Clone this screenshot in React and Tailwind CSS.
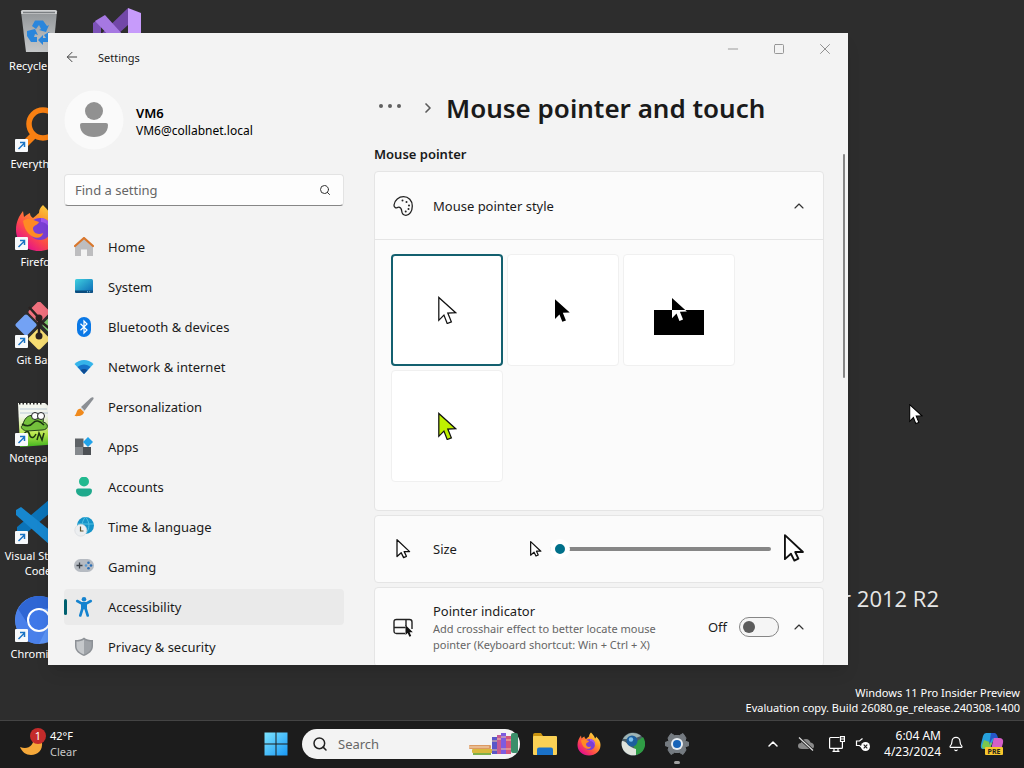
import React, { useState } from 'react'
import { ArrowLeft, Bell, ChevronRight, ChevronUp, Minus, Search, Square, X } from 'lucide-react'

const ARROW = 'M0 0V23.7L5.3 18.3L8.7 27L13 25.3L9.3 16.2L17.5 15.8Z'
const SOFT_ARROW = 'M2 1.6V18.4L6.2 14.6L8.6 19.4L11.4 18.1L9.2 13.4H14.6Z'

/* ---------- desktop icons ---------- */

function RecycleBinIcon() {
  return (
    <svg className="size-12" viewBox="0 0 48 48">
      <defs>
        <linearGradient id="bin" x1="0" y1="0" x2="0" y2="1">
          <stop offset="0" stopColor="#8f9396" />
          <stop offset="0.6" stopColor="#b2b5b7" />
          <stop offset="1" stopColor="#c6c8c9" />
        </linearGradient>
      </defs>
      <path d="M6 3.500Q6 2 8 2H40Q42 2 42 3.500L38 44H11Z" fill="url(#bin)" />
      <path d="M6 3.500Q6 2 8 2H40Q42 2 42 3.500L41.700 6H6.300Z" fill="#cfd1d2" />
      <path d="M8 4.500H40" stroke="#7b7f82" strokeWidth="1.500" />
      <g fill="#2a86dc">
        <path d="M17 18L20 12.500H28L32 18L34 17L31 24L24 22L26 21L24 17L21 21Z" />
        <path d="M12 23L20 21L23 27L20 26L19 29H22V34H16L12 28Z" />
        <path d="M34 24L37 30L33 34H28V37L23 32L28 27V30H31L29 27Z" />
      </g>
    </svg>
  )
}

function VisualStudioIcon() {
  return (
    <svg className="size-12" viewBox="0 0 48 48">
      <path d="M35 0L48 5V43L35 48Z" fill="#c79bfb" />
      <path d="M35 0V17L14 36L4 30Z" fill="#7247a8" />
      <path d="M0 15L3 13L8 18V30L0 35Z" fill="#7c52b8" />
      <path d="M2 13L12 7L40 38L35 48Z" fill="#a678e2" />
    </svg>
  )
}

function EverythingIcon() {
  return (
    <svg className="size-12" viewBox="0 0 48 48" fill="none" stroke="#f98012">
      <circle cx="28" cy="18" r="14" strokeWidth="5.500" />
      <path d="M18 30L9 39" strokeWidth="7" />
    </svg>
  )
}

function FirefoxIcon({ className, id }) {
  return (
    <svg className={className} viewBox="0 0 48 48">
      <defs>
        <linearGradient id={id} x1="0.9" y1="0.1" x2="0.2" y2="0.9">
          <stop offset="0" stopColor="#ffe34a" />
          <stop offset="0.35" stopColor="#ff9a2b" />
          <stop offset="0.7" stopColor="#ff4a4a" />
          <stop offset="1" stopColor="#e3128a" />
        </linearGradient>
      </defs>
      <path
        d="M28 1C31 4 35 8 36 13C38 12 38 10 38 9C44 14 47 20 47 26C47 38 37 47 24 47S1 38 1 26C1 18 4 12 8 7L9 13C11 11 13 10 15 9C15 11 16 13 18 14C21 12 22 10 24 9C24 5 26 3 28 1Z"
        fill={'url(#' + id + ')'}
      />
      <circle cx="25" cy="25" r="11" fill="#7b3fd6" />
      <path d="M8 17C13 13 18 16 24 18C23 21 19 21 18 24C18 30 24 31 28 29C27 37 11 36 8 17Z" fill="#ff8a24" />
      <path d="M26 14C32 14 37 19 36 27C34 22 31 18 26 18Z" fill="#a157f0" />
    </svg>
  )
}

function GitIcon() {
  return (
    <svg className="size-12" viewBox="0 0 48 48">
      <rect x="3" y="15" width="16" height="16" rx="2" transform="rotate(45 11 23)" fill="#73a2f4" />
      <rect x="16" y="2" width="16" height="16" rx="2" transform="rotate(45 24 10)" fill="#f0707d" />
      <rect x="30" y="15" width="16" height="16" rx="2" transform="rotate(45 38 23)" fill="#7fc970" />
      <rect x="16" y="29" width="16" height="16" rx="2" transform="rotate(45 24 37)" fill="#f7dd72" />
      <path d="M14 5L24 16V34M24 18L35 27" stroke="#2b2220" strokeWidth="2.500" fill="none" />
      <circle cx="24" cy="16" r="3.500" fill="#2b2220" />
      <circle cx="24" cy="34" r="3.500" fill="#2b2220" />
    </svg>
  )
}

function NotepadIcon() {
  return (
    <svg className="size-12" viewBox="0 0 48 48">
      <defs>
        <linearGradient id="npp" x1="0" y1="0" x2="0" y2="1">
          <stop offset="0.3" stopColor="#f4f7ef" />
          <stop offset="0.7" stopColor="#b9e84b" />
          <stop offset="1" stopColor="#3fb51f" />
        </linearGradient>
      </defs>
      <path d="M3 3H30L38 10L44 44L5 47Z" fill="url(#npp)" />
      <path d="M4 3H28" stroke="#222" strokeWidth="3" strokeDasharray="1.500 2" />
      <path d="M5 9H32M5 13H34" stroke="#bccbd6" strokeWidth="1" />
      <path d="M8 25C9 17 16 13 20 17C24 12 30 16 28 22C34 23 34 30 27 30L12 31C6 30 5 26 8 25Z" fill="#74c13c" stroke="#24421a" />
      <circle cx="20" cy="16" r="3.500" fill="#fff" stroke="#222" />
      <circle cx="26" cy="16" r="3.500" fill="#fff" stroke="#222" />
      <path d="M7 24Q14 28 18 23T29 25M9 34Q13 28 15 36Q18 40 21 34M22 40L24 33L27 40L29 33" stroke="#1c3312" strokeWidth="1.500" fill="none" />
    </svg>
  )
}

function VsCodeIcon() {
  return (
    <svg className="size-12" viewBox="0 0 48 48">
      <path d="M35 1L47 6V42L35 47L30 40L36 34V14L8 38L2 33V29Z" fill="#0b73b8" />
      <path d="M1 12L6 9L42 38L35 47L1 17Z" fill="#1787cf" />
    </svg>
  )
}

function ChromiumIcon() {
  return (
    <svg className="size-12" viewBox="0 0 48 48">
      <circle cx="24" cy="24" r="24" fill="#5c94f5" />
      <path d="M3 13A24 24 0 0 0 24 48L33 30L14 30Z" fill="#4a80ea" />
      <path d="M3 13A24 24 0 0 1 45 12L24 13Z" fill="#2f66d4" />
      <path d="M3 13L14 30L12 22L24 13Z" fill="#2f66d4" />
      <circle cx="24" cy="24" r="11" fill="#3f78e8" stroke="#fff" strokeWidth="2" />
    </svg>
  )
}

const DESKTOP_ICONS = [
  { label: 'Recycle Bin', icon: <RecycleBinIcon /> },
  { label: 'Everything', icon: <EverythingIcon />, shortcut: true },
  { label: 'Firefox', icon: <FirefoxIcon className="size-12" id="ff-desktop" />, shortcut: true },
  { label: 'Git Bash', icon: <GitIcon />, shortcut: true },
  { label: 'Notepad++', icon: <NotepadIcon />, shortcut: true },
  { label: 'Visual Studio Code', icon: <VsCodeIcon />, shortcut: true },
  { label: 'Chromium', icon: <ChromiumIcon />, shortcut: true },
]

function DesktopIcon({ label, icon, shortcut }) {
  return (
    <button className="flex h-[98px] w-[78px] flex-col items-center pt-2 text-[11px] leading-[15px] text-white">
      <span className="relative mb-0.5">
        {icon}
        {shortcut ? (
          <svg className="absolute bottom-0.5 left-0 size-[13px]" viewBox="0 0 13 13">
            <rect width="13" height="13" rx="1" fill="#f7f9fb" />
            <path d="M3.500 10L9 4.500M5 3.500H9.500V8" stroke="#1b74c4" strokeWidth="1.500" fill="none" />
          </svg>
        ) : null}
      </span>
      <span className="pr-1.5 pl-1 text-center">{label}</span>
    </button>
  )
}

/* ---------- navigation icons, all on a 20px grid ---------- */

function NavIcon({ name }) {
  return (
    <svg className="size-5 shrink-0" viewBox="0 0 20 20">
      {name === 'home' && (
        <>
          <path d="M1 9L10 1.500L19 9V19H13V12.500H7V19H1Z" fill="#bdbdbf" />
          <path d="M1 9L10 1L19 9" stroke="#d9762b" strokeWidth="2.200" fill="none" strokeLinecap="round" strokeLinejoin="round" />
        </>
      )}
      {name === 'system' && (
        <>
          <defs>
            <linearGradient id="sys" x1="0" y1="0" x2="1" y2="1">
              <stop offset="0" stopColor="#3fd0e0" />
              <stop offset="1" stopColor="#0b67b5" />
            </linearGradient>
          </defs>
          <rect x="1" y="2" width="18" height="14" rx="1.500" fill="url(#sys)" />
          <path d="M1 13.500H19V14.500Q19 16 17.500 16H2.500Q1 16 1 14.500Z" fill="#0b4c7e" />
          <path d="M13 14.800H17.500" stroke="#8fd0ee" strokeDasharray="1 1.200" />
        </>
      )}
      {name === 'bluetooth' && (
        <>
          <rect x="3" y="0" width="14" height="20" rx="7" fill="#0a78e6" />
          <path d="M6.500 6.700L13 13L10 16V4L13 7L6.500 13.300" stroke="#fff" strokeWidth="1.200" fill="none" />
        </>
      )}
      {name === 'network' && (
        <>
          <path d="M0.500 7C6 1.500 14 1.500 19.500 7L10 17Z" fill="#35b4ea" />
          <path d="M3.500 10C7 6.500 13 6.500 16.500 10L10 17Z" fill="#1673c9" />
          <path d="M6.500 13.300C8.500 11.500 11.500 11.500 13.500 13.300L10 17Z" fill="#0f4b92" />
        </>
      )}
      {name === 'brush' && (
        <>
          <path d="M19.500 2C20 0 18.500 0 17 0.800L7 10L10.500 13.800Z" fill="#8b8f94" />
          <path d="M6.500 11.500L10 15C9.500 19 4 19.500 0.500 19C3 17 2 12 6.500 11.500Z" fill="#f08a1c" />
          <path d="M6.700 10.800L10.300 14.400" stroke="#d9dadb" strokeWidth="1.200" />
        </>
      )}
      {name === 'apps' && (
        <>
          <path d="M1 1.500H9.500V10H1Z" fill="#5e6266" />
          <path d="M1 10H9.500V18H1Z" fill="#85898d" />
          <path d="M9 10H17V18H9Z" fill="#4c5054" />
          <path d="M14 0L19 5L14 10L9 5Z" fill="#22a3ea" />
        </>
      )}
      {name === 'accounts' && (
        <>
          <circle cx="10" cy="4.500" r="5" fill="#22b98f" />
          <path d="M2 13.500Q2 11.500 4 11.500H16Q18 11.500 18 13.500C18 17.500 14.500 19.500 10 19.500S2 17.500 2 13.500Z" fill="#1fa98c" />
        </>
      )}
      {name === 'time' && (
        <>
          <circle cx="11.500" cy="8.500" r="8.500" fill="#1593c8" />
          <path d="M3.500 7H19.500M11.500 0C7 5 7 12 11.500 17M11.500 0C16 5 16 12 11.500 17" stroke="#4fbfe2" fill="none" />
          <circle cx="6.800" cy="13.200" r="6" fill="#eceef0" stroke="#cfd3d6" strokeWidth="0.500" />
          <path d="M6.500 9.500V14H9.500" stroke="#5a5230" strokeWidth="1.200" fill="none" />
        </>
      )}
      {name === 'gaming' && (
        <>
          <rect x="0" y="2" width="20" height="13" rx="6.500" fill="#b6bbc2" />
          <path d="M5.500 5.500V11.500M2.500 8.500H8.500" stroke="#3b4148" strokeWidth="1.300" />
          <circle cx="14.500" cy="5.800" r="1.300" fill="#2d6fb5" />
          <circle cx="12" cy="8.500" r="1.300" fill="#5a9bd5" />
          <circle cx="17" cy="8.500" r="1.300" fill="#2d6fb5" />
          <circle cx="14.500" cy="11.200" r="1.300" fill="#2d6fb5" />
        </>
      )}
      {name === 'accessibility' && (
        <>
          <circle cx="10" cy="2.300" r="2.300" fill="#1583cf" />
          <path d="M3.200 4L7.500 6.300H12.500L16.800 4M10 6.500V11M8.300 6.500V12L6.300 18.500M11.700 6.500V12L13.700 18.500" stroke="#1583cf" strokeWidth="2.600" strokeLinecap="round" strokeLinejoin="round" fill="none" />
        </>
      )}
      {name === 'shield' && (
        <>
          <path d="M10 0.500C12 2.500 15.500 3 19 3V9C19 14 15 17 10 19C5 17 1 14 1 9V3C4.500 3 8 2.500 10 0.500Z" fill="#8d9196" />
          <path d="M10 2.500C12 4 14.500 4.500 17.500 4.500V9C17.500 13 14.500 15.500 10 17.500Z" fill="#9fa3a8" />
          <path d="M10 2.500C8 4 5.500 4.500 2.500 4.500V9C2.500 13 5.500 15.500 10 17.500Z" fill="#c5c8cb" />
        </>
      )}
    </svg>
  )
}

const NAV = [
  { icon: 'home', label: 'Home' },
  { icon: 'system', label: 'System' },
  { icon: 'bluetooth', label: 'Bluetooth & devices' },
  { icon: 'network', label: 'Network & internet' },
  { icon: 'brush', label: 'Personalization' },
  { icon: 'apps', label: 'Apps' },
  { icon: 'accounts', label: 'Accounts' },
  { icon: 'time', label: 'Time & language' },
  { icon: 'gaming', label: 'Gaming' },
  { icon: 'accessibility', label: 'Accessibility' },
  { icon: 'shield', label: 'Privacy & security' },
]

/* ---------- pointer previews ---------- */

function WhitePointer() {
  return (
    <svg className="h-7 w-[19px]" viewBox="-0.500 -1.500 19 29">
      <path d={ARROW} fill="#fff" stroke="#111" strokeWidth="1.300" />
    </svg>
  )
}

function BlackPointer() {
  return (
    <svg className="h-[23px] w-4" viewBox="0 0 19 27">
      <path d={ARROW} fill="#000" />
    </svg>
  )
}

function InvertedPointer() {
  return (
    <svg className="size-[50px]" viewBox="0 0 50 50">
      <defs>
        <clipPath id="lower-half">
          <rect x="0" y="25" width="50" height="25" />
        </clipPath>
      </defs>
      <path d={ARROW} transform="translate(18 13) scale(0.85)" fill="#000" />
      <rect x="0" y="25" width="50" height="25" fill="#000" />
      <g clipPath="url(#lower-half)">
        <path d={ARROW} transform="translate(18 13) scale(0.85)" fill="#fff" />
      </g>
    </svg>
  )
}

function CustomPointer() {
  return (
    <svg className="h-7 w-[19px]" viewBox="-0.500 -1.500 19 29">
      <path d={ARROW} fill="#bff000" stroke="#111" strokeWidth="1.300" />
    </svg>
  )
}

const STYLES = [
  { id: 'white', label: 'White', preview: <WhitePointer /> },
  { id: 'black', label: 'Black', preview: <BlackPointer /> },
  { id: 'inverted', label: 'Inverted', preview: <InvertedPointer /> },
  { id: 'custom', label: 'Custom', preview: <CustomPointer /> },
]

function SoftArrow({ className, strokeWidth }) {
  return (
    <svg className={className} viewBox="0 0.800 16 21">
      <path d={SOFT_ARROW} fill="#fff" stroke="#111" strokeWidth={strokeWidth} strokeLinejoin="round" />
    </svg>
  )
}

function PaletteIcon() {
  return (
    <svg className="size-5" viewBox="0 0 20 20" fill="none" stroke="#222" strokeWidth="1.300">
      <path d="M1 9C1.500 4 6 0.700 10.500 0.700C15.500 0.700 19.300 4.500 19.300 10C19.300 15.500 16.500 19.300 13 19.300C10 19.300 9 17.500 8.700 15C8.500 12.500 7.500 11.500 6 11.200C4.500 11 3.500 12.300 2.300 11.600C1.300 11 0.900 10 1 9Z" />
      <g fill="#222" stroke="none">
        <circle cx="9.500" cy="4.500" r="1" />
        <circle cx="13.500" cy="6" r="1" />
        <circle cx="16" cy="9.500" r="1" />
        <circle cx="15.500" cy="13" r="1" />
        <circle cx="12.700" cy="15.500" r="1" />
      </g>
    </svg>
  )
}

function IndicatorIcon() {
  return (
    <svg className="size-5" viewBox="0 0 20 20">
      <path d="M12 16.500H3.500Q1 16.500 1 14V5Q1 2.500 3.500 2.500H16.500Q19 2.500 19 5V12M1 10.500H12.500M13 2.500V9" fill="none" stroke="#222" strokeWidth="1.400" />
      <path d="M12.500 8V18L14.700 16L16.400 19.800L18.200 19L16.600 15.300H19.800Z" fill="#111" />
    </svg>
  )
}

/* ---------- settings window ---------- */

function Sidebar() {
  const [query, setQuery] = useState('')
  return (
    <aside className="w-[280px] shrink-0 pt-[9px]">
      <div className="flex items-center gap-3">
        <svg className="size-[60px]" viewBox="0 0 60 60">
          <circle cx="30" cy="30" r="29.500" fill="#fafafa" />
          <circle cx="30" cy="21" r="9" fill="#919191" />
          <path d="M16 35Q16 33 18 33H42Q44 33 44 35C44 43 38 47 30 47S16 43 16 35Z" fill="#919191" />
        </svg>
        <div className="pt-0.5">
          <div className="text-[13px] leading-5 font-semibold text-black">VM6</div>
          <div className="text-xs leading-4 text-black">VM6@collabnet.local</div>
        </div>
      </div>

      <label className="mt-6 flex h-8 items-center rounded-sm border border-[#e3e3e3] border-b-[#868686] bg-[#fdfdfd] pr-3 pl-2.5">
        <input
          className="min-w-0 flex-1 bg-transparent text-[13px] leading-5 outline-none placeholder:text-[#666]"
          placeholder="Find a setting"
          aria-label="Find a setting"
          value={query}
          onChange={(e) => setQuery(e.target.value)}
        />
        <Search className="size-3 text-[#333]" strokeWidth={2} />
      </label>

      <nav className="mt-[23px] flex flex-col gap-1">
        {NAV.map((item) => {
          const active = item.label === 'Accessibility'
          return (
            <a
              key={item.label}
              href="#"
              aria-current={active ? 'page' : undefined}
              className={'flex h-9 items-center rounded text-[13px] leading-5 text-[#1b1b1b] ' + (active ? 'bg-[#eaeaea]' : '')}
            >
              <span className={'mr-[7px] h-4 w-[3px] rounded-full ' + (active ? 'bg-[#00606f]' : '')} />
              <NavIcon name={item.icon} />
              <span className="ml-3.5">{item.label}</span>
            </a>
          )
        })}
      </nav>
    </aside>
  )
}

function PointerPage() {
  const [style, setStyle] = useState('white')
  const [size, setSize] = useState(1)
  const [indicator, setIndicator] = useState(false)

  return (
    <main className="min-w-0 flex-1 overflow-hidden pt-[9px] pr-6 pl-[30px]">
      <div className="flex h-9 items-center">
        <button aria-label="More" className="flex w-8 justify-center gap-[5px] pb-1">
          <span className="size-1 rounded-full bg-[#606060]" />
          <span className="size-1 rounded-full bg-[#606060]" />
          <span className="size-1 rounded-full bg-[#606060]" />
        </button>
        <ChevronRight className="ml-3.5 size-4 text-[#5a5a5a]" strokeWidth={2.5} />
        <h1 className="ml-2.5 text-[26px] leading-9 font-semibold whitespace-nowrap text-[#1a1a1a]">Mouse pointer and touch</h1>
      </div>

      <h2 className="mt-[18px] text-[13px] leading-5 font-semibold text-[#1a1a1a]">Mouse pointer</h2>

      <div className="mt-[7px] flex flex-col gap-1">
        <section className="rounded border border-[#e5e5e5] bg-[#fbfbfb]">
          <button className="flex h-[67px] w-full items-center pr-4 pl-[18px] text-left">
            <PaletteIcon />
            <span className="ml-5 flex-1 text-[13px] leading-5 text-[#1b1b1b]">Mouse pointer style</span>
            <ChevronUp className="size-4 text-[#333]" strokeWidth={1.75} />
          </button>
          <div className="flex flex-wrap gap-1 border-t border-[#e5e5e5] px-4 pt-3.5 pb-7">
            {STYLES.map((s) => (
              <button
                key={s.id}
                aria-label={s.label}
                aria-pressed={style === s.id}
                onClick={() => setStyle(s.id)}
                className={
                  'flex size-28 items-center justify-center rounded bg-white ' +
                  (style === s.id ? 'border-2 border-[#13606f]' : 'border border-[#f0f0f0]')
                }
              >
                {s.preview}
              </button>
            ))}
          </div>
        </section>

        <section className="flex h-[68px] items-center rounded border border-[#e5e5e5] bg-[#fbfbfb] px-[18px]">
          <span className="flex w-5 justify-center">
            <SoftArrow className="h-[21px] w-4" strokeWidth={1.3} />
          </span>
          <label htmlFor="pointer-size" className="ml-5 flex-1 text-[13px] leading-5 text-[#1b1b1b]">Size</label>
          <SoftArrow className="mr-2 h-[17px] w-[13px]" strokeWidth={1.5} />
          <input
            id="pointer-size"
            type="range"
            min="1"
            max="15"
            value={size}
            onChange={(e) => setSize(Number(e.target.value))}
            className="mr-[11px] h-5 w-[221px] appearance-none bg-transparent [&::-webkit-slider-runnable-track]:h-1 [&::-webkit-slider-runnable-track]:rounded-full [&::-webkit-slider-runnable-track]:bg-[#868686] [&::-webkit-slider-thumb]:-mt-2 [&::-webkit-slider-thumb]:size-5 [&::-webkit-slider-thumb]:appearance-none [&::-webkit-slider-thumb]:rounded-full [&::-webkit-slider-thumb]:border-[5px] [&::-webkit-slider-thumb]:border-solid [&::-webkit-slider-thumb]:border-white [&::-webkit-slider-thumb]:bg-[#00708a]"
          />
          <SoftArrow className="h-[30px] w-[23px]" strokeWidth={1.3} />
        </section>

        <section className="flex items-center rounded border border-[#e5e5e5] bg-[#fbfbfb] py-[13px] pr-4 pl-[18px]">
          <IndicatorIcon />
          <label htmlFor="pointer-indicator" className="ml-5 flex-1">
            <span className="block text-[13px] leading-5 text-[#1b1b1b]">Pointer indicator</span>
            <span className="block w-[250px] text-[11px] leading-4 text-[#666]">
              Add crosshair effect to better locate mouse pointer (Keyboard shortcut: Win + Ctrl + X)
            </span>
          </label>
          <span className="mr-3 text-[13px] leading-5 text-[#1b1b1b]">{indicator ? 'On' : 'Off'}</span>
          <input
            id="pointer-indicator"
            type="checkbox"
            role="switch"
            checked={indicator}
            onChange={(e) => setIndicator(e.target.checked)}
            className="mr-3 flex h-5 w-10 appearance-none items-center rounded-full border border-[#868686] bg-[#f5f5f5] px-[3px] before:size-3 before:rounded-full before:bg-[#5c5c5c] before:content-[''] checked:justify-end checked:bg-[#00708a] checked:before:bg-white"
          />
          <ChevronUp className="size-4 text-[#333]" strokeWidth={1.75} />
        </section>
      </div>
    </main>
  )
}

function SettingsWindow() {
  return (
    <div className="absolute top-[33px] left-12 flex h-[632px] w-[800px] flex-col overflow-hidden bg-[#f3f3f3] shadow-lg">
      <header className="flex h-12 shrink-0 items-center">
        <button aria-label="Back" className="ml-4 flex size-4">
          <ArrowLeft className="size-4 text-[#444]" strokeWidth={1.5} />
        </button>
        <span className="ml-[18px] flex-1 pt-0.5 text-[11px] leading-4 text-[#1b1b1b]">Settings</span>
        <div className="flex self-start text-[#8a8a8a]">
          <button aria-label="Minimize" className="flex h-8 w-[46px] items-center justify-center">
            <Minus className="size-4" strokeWidth={1.25} />
          </button>
          <button aria-label="Maximize" className="flex h-8 w-[46px] items-center justify-center">
            <Square className="size-3" strokeWidth={1.75} />
          </button>
          <button aria-label="Close" className="flex h-8 w-[46px] items-center justify-center">
            <X className="size-[18px]" strokeWidth={1.25} />
          </button>
        </div>
      </header>
      <div className="flex min-h-0 flex-1 pl-4">
        <Sidebar />
        <PointerPage />
      </div>
      <span className="absolute top-[121px] right-[3px] h-56 w-0.5 rounded-full bg-[#868686]" />
    </div>
  )
}

/* ---------- taskbar ---------- */

function StartIcon() {
  return (
    <svg className="size-6" viewBox="0 0 24 24">
      <defs>
        <linearGradient id="start" gradientUnits="userSpaceOnUse" x1="0" y1="0" x2="24" y2="24">
          <stop offset="0" stopColor="#7fe6ff" />
          <stop offset="1" stopColor="#1696f5" />
        </linearGradient>
      </defs>
      <path d="M0.500 0.500H11.500V11.500H0.500ZM12.500 0.500H23.500V11.500H12.500ZM0.500 12.500H11.500V23.500H0.500ZM12.500 12.500H23.500V23.500H12.500Z" fill="url(#start)" />
    </svg>
  )
}

function BooksIcon() {
  return (
    <svg className="h-6 w-[52px]" viewBox="0 0 52 24">
      <rect x="1" y="13" width="22" height="4" rx="1" fill="#dc9a62" />
      <rect x="4" y="17" width="22" height="4" rx="1" fill="#d9b93c" />
      <rect x="1" y="14.500" width="20" height="1" fill="#f3dcc0" />
      <rect x="5" y="21" width="18" height="2" fill="#7fb04a" />
      <rect x="24" y="5" width="5" height="17" fill="#5a56c8" />
      <rect x="29" y="3" width="4" height="19" fill="#c55a94" />
      <rect x="33" y="1" width="5" height="21" fill="#7d5be0" />
      <rect x="38" y="4" width="5" height="18" fill="#d4567c" />
      <rect x="43" y="1" width="7" height="20" rx="2" fill="#3b8f6a" />
      <path d="M24 9H29M29 7H33M33 5H38M38 8H43M24 18H29M33 17H38M38 17H43" stroke="#f0c7a0" />
    </svg>
  )
}

function FolderIcon() {
  return (
    <svg className="size-6" viewBox="0 0 24 24">
      <path d="M0 3Q0 1 2 1H8L10 4V5H0Z" fill="#c9930f" />
      <rect x="0" y="4" width="24" height="19" rx="1" fill="#fad155" />
      <path d="M4 23V17.500Q4 15.500 6 15.500H18Q20 15.500 20 17.500V23Z" fill="#1a72c9" />
    </svg>
  )
}

function GlobeIcon() {
  return (
    <svg className="size-6" viewBox="0 0 24 24">
      <circle cx="12" cy="12" r="11.500" fill="#4c5d66" />
      <path d="M12 12L22 5A11.500 11.500 0 0 1 15 23Z" fill="#2f9c45" />
      <path d="M1 9C6 9 8 16 15 17L15 23A11.500 11.500 0 0 1 1 9Z" fill="#dfe3dc" />
      <path d="M2 7A11.500 11.500 0 0 1 20 4L12 7Z" fill="#9fb4b4" />
      <circle cx="11" cy="9" r="5.500" fill="#1c5f9e" />
      <circle cx="10" cy="7.500" r="2.200" fill="#7cc0ec" />
    </svg>
  )
}

function GearIcon() {
  return (
    <svg className="size-6" viewBox="0 0 24 24">
      <path d="M6 1.500L9.500 3.500H14.500L18 1.500L21 6L20 9L24 10.500V13.500L20 15L21 18L18 22.500L14.500 20.500H9.500L6 22.500L3 18L4 15L0 13.500V10.500L4 9L3 6Z" fill="#757b81" stroke="#757b81" strokeLinejoin="round" />
      <circle cx="12" cy="12" r="6" fill="#e8edf2" />
      <circle cx="12" cy="12" r="4" fill="#1763b8" />
    </svg>
  )
}

function WeatherIcon() {
  return (
    <svg className="h-8 w-7" viewBox="0 0 28 32">
      <path d="M0 19C8 22 14 18 14 8L22 14C23 22 18 27 11 27C6 27 2 24 0 19Z" fill="#f5a83a" />
      <circle cx="18" cy="8" r="8" fill="#c42b2b" />
      <text x="18" y="12" textAnchor="middle" fontSize="11" fill="#fff">1</text>
    </svg>
  )
}

function CopilotIcon() {
  return (
    <svg className="size-6" viewBox="0 0 24 24">
      <path d="M6 1H14Q16 1 15 4L11 14Q10 17 7 17H3Q0 17 1 12L3 4Q4 1 6 1Z" fill="#26a0dc" />
      <path d="M4 8L2 14Q2 17 5 17H7Q10 17 11 14L12 11Z" fill="#7ac74f" />
      <path d="M14 6H19Q24 6 23 11L21 18H11L13 9Q13.500 6 14 6Z" fill="#d45fc8" />
      <path d="M11 1H14Q17 1 18 6H14Q12 6 11 9L9 13Z" fill="#2556c9" />
      <rect x="5" y="15" width="18" height="8" rx="1" fill="#f8c62c" />
      <text x="14" y="21.500" textAnchor="middle" fontSize="7" fontWeight="700" fill="#222">PRE</text>
    </svg>
  )
}

const PINNED = [
  { label: 'File Explorer', icon: <FolderIcon /> },
  { label: 'Firefox', icon: <FirefoxIcon className="size-6" id="ff-task" /> },
  { label: 'Web browser', icon: <GlobeIcon /> },
  { label: 'Settings', icon: <GearIcon />, open: true },
]

function Taskbar() {
  return (
    <footer className="flex h-12 shrink-0 items-center border-t border-[#444] bg-[#1c1c1c] pb-0.5 text-white">
      <button className="flex w-[254px] items-center gap-0.5 pl-5 text-left text-[11px] leading-4">
        <WeatherIcon />
        <span>
          <span className="block">42°F</span>
          <span className="block text-[#c8c8c8]">Clear</span>
        </span>
      </button>

      <button aria-label="Start" className="flex w-11 justify-center">
        <StartIcon />
      </button>
      <label className="ml-1 flex h-[30px] w-[218px] items-center rounded-full bg-[#f3f3f3] pl-2.5">
        <Search className="size-4 text-[#222]" strokeWidth={2.25} />
        <input
          className="ml-2.5 w-0 flex-1 bg-transparent text-[13px] leading-5 text-black outline-none placeholder:text-[#666]"
          placeholder="Search"
          aria-label="Search"
        />
        <BooksIcon />
      </label>
      <div className="ml-[3px] flex">
        {PINNED.map((app) => (
          <button key={app.label} aria-label={app.label} className="relative flex h-11 w-11 items-center justify-center">
            {app.icon}
            {app.open ? <span className="absolute bottom-0.5 h-[3px] w-1.5 rounded-full bg-[#a0a0a0]" /> : null}
          </button>
        ))}
      </div>

      <div className="ml-auto flex items-center pr-5">
        <button aria-label="Show hidden icons" className="mr-4">
          <ChevronUp className="size-4" strokeWidth={2.25} />
        </button>
        <svg className="mr-3.5 h-4 w-[18px]" viewBox="0 0 18 16">
          <path d="M5 13Q1 13 1 10Q1 7 4 7Q5 3 9 3Q12.500 3 13.500 6.500Q17 7 17 10Q17 13 14 13Z" fill="#8a8a8a" />
          <path d="M2 1.500L16 14.500" stroke="#1c1c1c" strokeWidth="3" />
          <path d="M2 1.500L16 14.500" stroke="#e0e0e0" strokeWidth="1.200" />
        </svg>
        <svg className="mr-2.5 size-4" viewBox="0 0 16 16" fill="none" stroke="#fff" strokeWidth="1.200">
          <path d="M10.500 1.500H1.500Q0.600 1.500 0.600 2.500V11.500Q0.600 12.400 1.500 12.400H12.500Q13.400 12.400 13.400 11.500V8M5 12.500V15.400M9 12.500V15.400M3.500 15.400H10.500" />
          <path d="M11.500 0.600H15.400V5.500H11.500ZM13.400 5.500V8M11.500 3H15.400" />
        </svg>
        <svg className="mr-3.5 h-4 w-[15px]" viewBox="0 0 15 16">
          <path d="M7.500 2.500L4.500 5H1.500V9.500H4.500L7.500 12" fill="none" stroke="#fff" strokeWidth="1.200" />
          <circle cx="10.500" cy="10.500" r="4.500" fill="#fff" />
          <path d="M8.700 8.700L12.300 12.300M12.300 8.700L8.700 12.300" stroke="#1c1c1c" strokeWidth="1.100" />
        </svg>
        <button className="text-right text-xs leading-4">
          <span className="block">6:04 AM</span>
          <span className="block">4/23/2024</span>
        </button>
        <Bell className="ml-[7px] size-4" strokeWidth={1.75} />
        <button aria-label="Copilot" className="ml-4">
          <CopilotIcon />
        </button>
      </div>
    </footer>
  )
}

export default function App() {
  return (
    <div className="flex h-screen flex-col overflow-hidden bg-[#2d2d2d] font-['Noto_Sans','Open_Sans',sans-serif]">
      <div className="relative min-h-0 flex-1 overflow-hidden">
        <div className="flex items-start">
          <div className="flex flex-col">
            {DESKTOP_ICONS.map((d) => (
              <DesktopIcon key={d.label} {...d} />
            ))}
          </div>
          <button aria-label="Visual Studio" className="flex w-[78px] justify-center pt-2">
            <VisualStudioIcon />
          </button>
        </div>

        <div className="absolute top-[583px] right-[85px] font-['Open_Sans',sans-serif] text-[22px] leading-[30px] text-[#e6e6e6]">
          Windows Server 2012 R2
        </div>
        <div className="absolute right-1 bottom-[5px] text-right text-[11px] leading-[15px] text-white">
          <div>Windows 11 Pro Insider Preview</div>
          <div>Evaluation copy. Build 26080.ge_release.240308-1400</div>
        </div>

        <SettingsWindow />

        <svg className="absolute top-[404px] left-[909px] h-[21px] w-[14px]" viewBox="-1 -1 20 30">
          <path d={ARROW} fill="#fff" stroke="#000" strokeWidth="1.500" />
        </svg>
      </div>
      <Taskbar />
    </div>
  )
}
